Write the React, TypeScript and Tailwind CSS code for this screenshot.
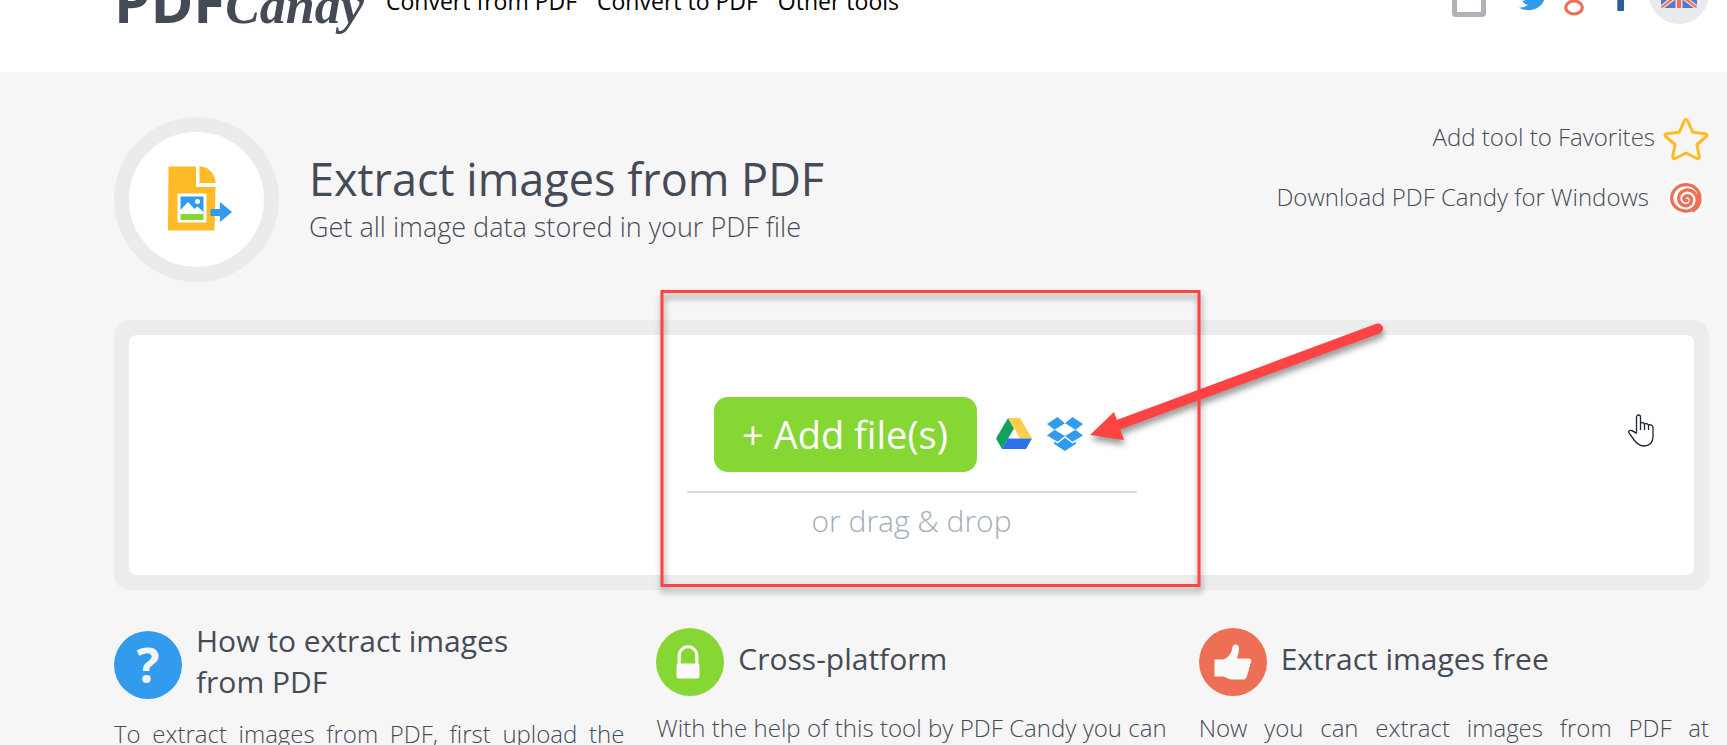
import type { ReactNode } from "react";
import { FaTwitter, FaFacebookF } from "react-icons/fa";

const navLinks = ["Convert from PDF", "Convert to PDF", "Other tools"];

const features = [
  {
    title: "How to extract images from PDF",
    text: "To extract images from PDF, first upload the",
    color: "bg-[#339bee]",
    icon: <span className="text-[48px] leading-none font-bold text-[#f5f5f5]">?</span>,
  },
  {
    title: "Cross-platform",
    text: "With the help of this tool by PDF Candy you can",
    color: "bg-[#86d634]",
    icon: <LockIcon />,
  },
  {
    title: "Extract images free",
    text: "Now you can extract images from PDF at",
    color: "bg-[#ed6f56]",
    icon: <ThumbIcon />,
  },
];

function LockIcon() {
  return (
    <svg viewBox="0 0 24 34" className="mr-1 h-[34px] w-6" aria-hidden="true">
      <path d="M3.200 20V10.500a8.800 8.800 0 0 1 17.600 0V20" fill="none" stroke="#fafafa" strokeWidth="3.200" />
      <rect x="0.500" y="18.500" width="23" height="15" rx="2" fill="#fafafa" />
    </svg>
  );
}

function ThumbIcon() {
  return (
    <svg viewBox="0 0 38 36" className="h-9 w-[38px]" aria-hidden="true">
      <path
        d="M.5 15.500H9c4.500-1.200 8.500-5.500 9.200-11C18.600 1.500 20 .5 21.700.5c2.300 0 3.300 1.700 3.300 4 0 3.500-1.200 7-2 10h11.500c2 0 3 1.200 2.800 2.800-.1 1.300-.7 2.200-1.300 2.700.1 1.600-.3 3-1 4.200.1 1.700-.4 3-1.200 4 0 1.500-.3 2.800-1 3.600-.2 2.500-1.300 3.700-3.500 3.700H17.500c-3.500 0-5.500-3-9-3H.5z"
        fill="#fafafa"
      />
    </svg>
  );
}

function ExtractIcon() {
  return (
    <svg viewBox="0 0 64 66" className="mb-0.5 ml-1.5 h-[66px] w-16" aria-hidden="true">
      <path d="M.5.5h27.500v20.500H47.500L46.500 64.500H0z" fill="#ffba27" />
      <path d="M31.500.5C40.500.5 47.500 8 47.500 17H31.500z" fill="#ffba27" />
      <path d="M9.500 27.500h29v29h-29z" fill="#fff" />
      <path d="M12.500 30.500h23v15.500l-6-5.500-3 2.500-6.500-7-7.500 8z" fill="#339bee" />
      <circle cx="29.500" cy="35.500" r="2.500" fill="#fff" />
      <path d="M12.500 48h23v6h-23z" fill="#86d634" />
      <path d="M42.500 43h9.500v-7l12 10-12 10v-6h-9.500z" fill="#339bee" />
    </svg>
  );
}

function StarIcon() {
  return (
    <svg viewBox="0 0 46 44" className="h-11 w-[46px]" aria-hidden="true">
      <path
        d="M23 2.500q1.200 0 1.800 1.600L29.700 15.200l12.800 1.500q2.600.8.800 2.800L34 27.500l2.300 12.300q0 2.600-2.400 1.700L23 36 12.100 41.500q-2.400.9-2.400-1.700L12 27.500 2.700 19.500q-1.800-2 .8-2.800l12.800-1.500L21.200 4.100Q21.800 2.500 23 2.500z"
        fill="none"
        stroke="#ffba27"
        strokeWidth="3"
        strokeLinejoin="round"
      />
    </svg>
  );
}

function CandyIcon() {
  return (
    <svg viewBox="0 0 38 38" className="mr-1 h-[38px] w-[38px]" aria-hidden="true">
      <circle cx="19" cy="19" r="18.500" fill="#fff" />
      <path
        d="M20 20.500c-2.500 1-4.200-2-2.300-3.800 3-2.600 7.300.1 6.800 4-.6 4.800-6.200 6.500-9.800 3.700-4.800-3.800-3.600-11.400 2.200-13.700 6.800-2.600 13.400 2.500 13.300 9.300C30 27.300 24 31.500 18 31 10 30.300 4.500 24.500 4.700 18 5 10 11.500 4.600 19.500 4.700 27.500 5 33 11 33 18.500c0 5.500-2.500 9.500-6.500 12.200"
        fill="none"
        stroke="#ed6f56"
        strokeWidth="3.300"
        strokeLinecap="round"
      />
    </svg>
  );
}

function DriveIcon() {
  return (
    <svg viewBox="0 0 36 31" className="h-[31px] w-9" aria-hidden="true">
      <path d="M12 0 0 20.500 6 31 18 10.500z" fill="#11a05e" />
      <path d="M12 0h12l12 20.500H24z" fill="#ffcd4c" />
      <path d="M12 20.500h24L30 31H6z" fill="#2f72e8" />
    </svg>
  );
}

function DropboxIcon() {
  return (
    <svg viewBox="0 0 36 34" className="h-[34px] w-9" aria-hidden="true">
      <g fill="#339bee">
        <path d="M10.500 0 0 7l7.500 5.700L18 6.200z" />
        <path d="M25.500 0 36 7l-7.500 5.700L18 6.200z" />
        <path d="M7.500 12.700 0 18.500l10.500 6.300L18 19z" />
        <path d="m28.500 12.700 7.500 5.800-10.500 6.300L18 19z" />
        <path d="m18 20.700-7.500 5.900-3.300-2v2.300L18 34l10.800-7.100v-2.300l-3.300 2z" />
      </g>
    </svg>
  );
}

function GoogleIcon() {
  return (
    <svg viewBox="0 0 22 40" className="h-10 w-[22px]" aria-hidden="true">
      <g fill="none" stroke="#ed6f56" strokeWidth="3.200">
        <ellipse cx="10" cy="11" rx="6" ry="8" />
        <path d="M9 2.500h11M13 18c-4 3-2 5 1 7" />
        <ellipse cx="11" cy="31.500" rx="8.300" ry="6.500" />
      </g>
    </svg>
  );
}

function FlagIcon() {
  return (
    <svg viewBox="0 0 36 28" className="h-7 w-9" aria-hidden="true">
      <rect width="36" height="28" rx="2" fill="#5779c9" />
      <path d="m1 1 34 26M35 1 1 27" stroke="#f3dcdc" strokeWidth="4.500" />
      <path d="m1 1 34 26M35 1 1 27" stroke="#ed6f56" strokeWidth="2" />
      <path d="M18 0v28M0 14h36" stroke="#f3dcdc" strokeWidth="7" />
      <path d="M18 0v28M0 14h36" stroke="#ed6f56" strokeWidth="4" />
    </svg>
  );
}

function HandCursor() {
  return (
    <svg viewBox="0 0 26 33" className="absolute top-[79px] right-10 h-[33px] w-[26px]" aria-hidden="true">
      <path
        d="M8.500 19.500V3a2 2 0 0 1 4 0v13M12.500 9c2-.8 4 0 4 2v5M16.500 10c2-.8 4 0 4 2v4M20.500 11c2.500-.8 4.500.5 4.500 2.500V23c0 5.500-3.500 9-9 9-4.500 0-7-2.500-9.500-5.500L1 19c-1-1.500.5-3.200 2.500-2.500 2 .5 3.500 2 5 3"
        fill="none"
        stroke="#1b2438"
        strokeWidth="1.300"
      />
    </svg>
  );
}

// Red frame and arrow pointing at the cloud storage buttons
function Callout() {
  return (
    <svg
      viewBox="0 0 740 310"
      className="pointer-events-none absolute -top-[50px] left-1/2 -ml-[257px] h-[310px] w-[740px] overflow-visible drop-shadow-[1px_5px_3px_rgba(0,0,0,0.4)]"
      aria-hidden="true"
    >
      <rect x="7" y="6.500" width="537" height="294" fill="none" stroke="#ff4242" strokeWidth="3" />
      <path d="M460 141 723 43.500" stroke="#ff4242" strokeWidth="10" strokeLinecap="round" />
      <path d="m435 150 24-23 10 28z" fill="#ff4242" />
    </svg>
  );
}

function IconLink({ label, children }: { label: string; children: ReactNode }) {
  return (
    <a href="#" aria-label={label}>
      {children}
    </a>
  );
}

function Header() {
  return (
    <header className="-mt-[84px] flex h-[156px] items-center bg-white pr-[18px] pl-[114px]">
      <a href="#" className="mt-4 flex w-[250px] items-baseline text-[#454b56]">
        <span className="text-[58px] leading-none font-bold">PDF</span>
        <span className="font-[Liberation_Serif,serif] text-[52px] leading-none font-bold italic">Candy</span>
      </a>
      <nav className="mt-3.5 ml-[22px] flex gap-5 text-[23px] text-black">
        {navLinks.map((link) => (
          <a key={link} href="#">
            {link}
          </a>
        ))}
      </nav>
      <div className="ml-auto flex items-center">
        <button aria-label="Mobile version" className="mr-[33px] h-[46px] w-[34px] rounded-sm border-5 border-[#b0b2b7]" />
        <IconLink label="Twitter">
          <FaTwitter className="mt-2 h-[30px] w-[30px] text-[#339bee]" />
        </IconLink>
        <div className="mt-1 ml-3.5">
          <IconLink label="Google">
            <GoogleIcon />
          </IconLink>
        </div>
        <div className="mr-[17px] ml-[25px]">
          <IconLink label="Facebook">
            <FaFacebookF className="h-[34px] w-[22px] text-[#2f5a9c]" />
          </IconLink>
        </div>
        <button aria-label="Language: English" className="flex h-15 w-15 items-center justify-center rounded-full bg-[#e9eaec]">
          <FlagIcon />
        </button>
      </div>
    </header>
  );
}

export default function App() {
  return (
    <div className="h-screen overflow-hidden bg-[#f6f6f6] font-[Open_Sans,sans-serif] text-[#454b56]">
      <Header />
      <main className="pr-[18px] pl-[114px]">
        <section className="flex pt-[45px]">
          <div className="flex h-[165px] w-[165px] items-center justify-center rounded-full border-[15px] border-[#e9ebed] bg-white">
            <ExtractIcon />
          </div>
          <div className="ml-[30px] pt-8">
            <h1 className="text-[45px] leading-[60px]">Extract images from PDF</h1>
            <p className="text-[27px] leading-9 font-light">Get all image data stored in your PDF file</p>
          </div>
          <div className="ml-auto flex flex-col items-end gap-4 text-[24px] font-light">
            <a href="#" className="flex h-11 items-center gap-2">
              <span className="mb-1">Add tool to Favorites</span>
              <StarIcon />
            </a>
            <a href="#" className="flex h-11 items-center gap-[18px]">
              <span className="mb-1">Download PDF Candy for Windows</span>
              <CandyIcon />
            </a>
          </div>
        </section>

        <section className="mt-[38px] rounded-2xl bg-[#ededed] p-[15px]">
          <div className="relative rounded-lg bg-white">
            <div className="mx-auto flex h-60 w-[450px] flex-col pt-[62px]">
              <div className="flex items-center pl-[27px]">
                <button className="h-[75px] w-[263px] rounded-[14px] bg-[#86d634] text-[38px] text-white">+ Add file(s)</button>
                <button aria-label="Google Drive" className="mb-0.5 ml-[19px]">
                  <DriveIcon />
                </button>
                <button aria-label="Dropbox" className="mb-0.5 ml-[15px]">
                  <DropboxIcon />
                </button>
              </div>
              <p className="mt-[19px] border-t-2 border-[#dcdcdc] pt-1.5 text-center text-[30px] leading-[44px] font-light text-[#a3adb9]">
                or drag &amp; drop
              </p>
            </div>
            <HandCursor />
            <Callout />
          </div>
        </section>

        <section className="mt-[30px] grid grid-cols-3 gap-8">
          {features.map((feature) => (
            <article key={feature.title}>
              <div className="flex min-h-[76px] items-center gap-[14px]">
                <div className={`mt-2 flex h-[68px] w-[68px] shrink-0 items-center justify-center rounded-full ${feature.color}`}>
                  {feature.icon}
                </div>
                <h2 className="max-w-[350px] text-[30px] leading-[41px]">{feature.title}</h2>
              </div>
              <p className="mt-[15px] text-[24px] leading-[33px] font-light [text-align-last:justify]">{feature.text}</p>
            </article>
          ))}
        </section>
      </main>
    </div>
  );
}
